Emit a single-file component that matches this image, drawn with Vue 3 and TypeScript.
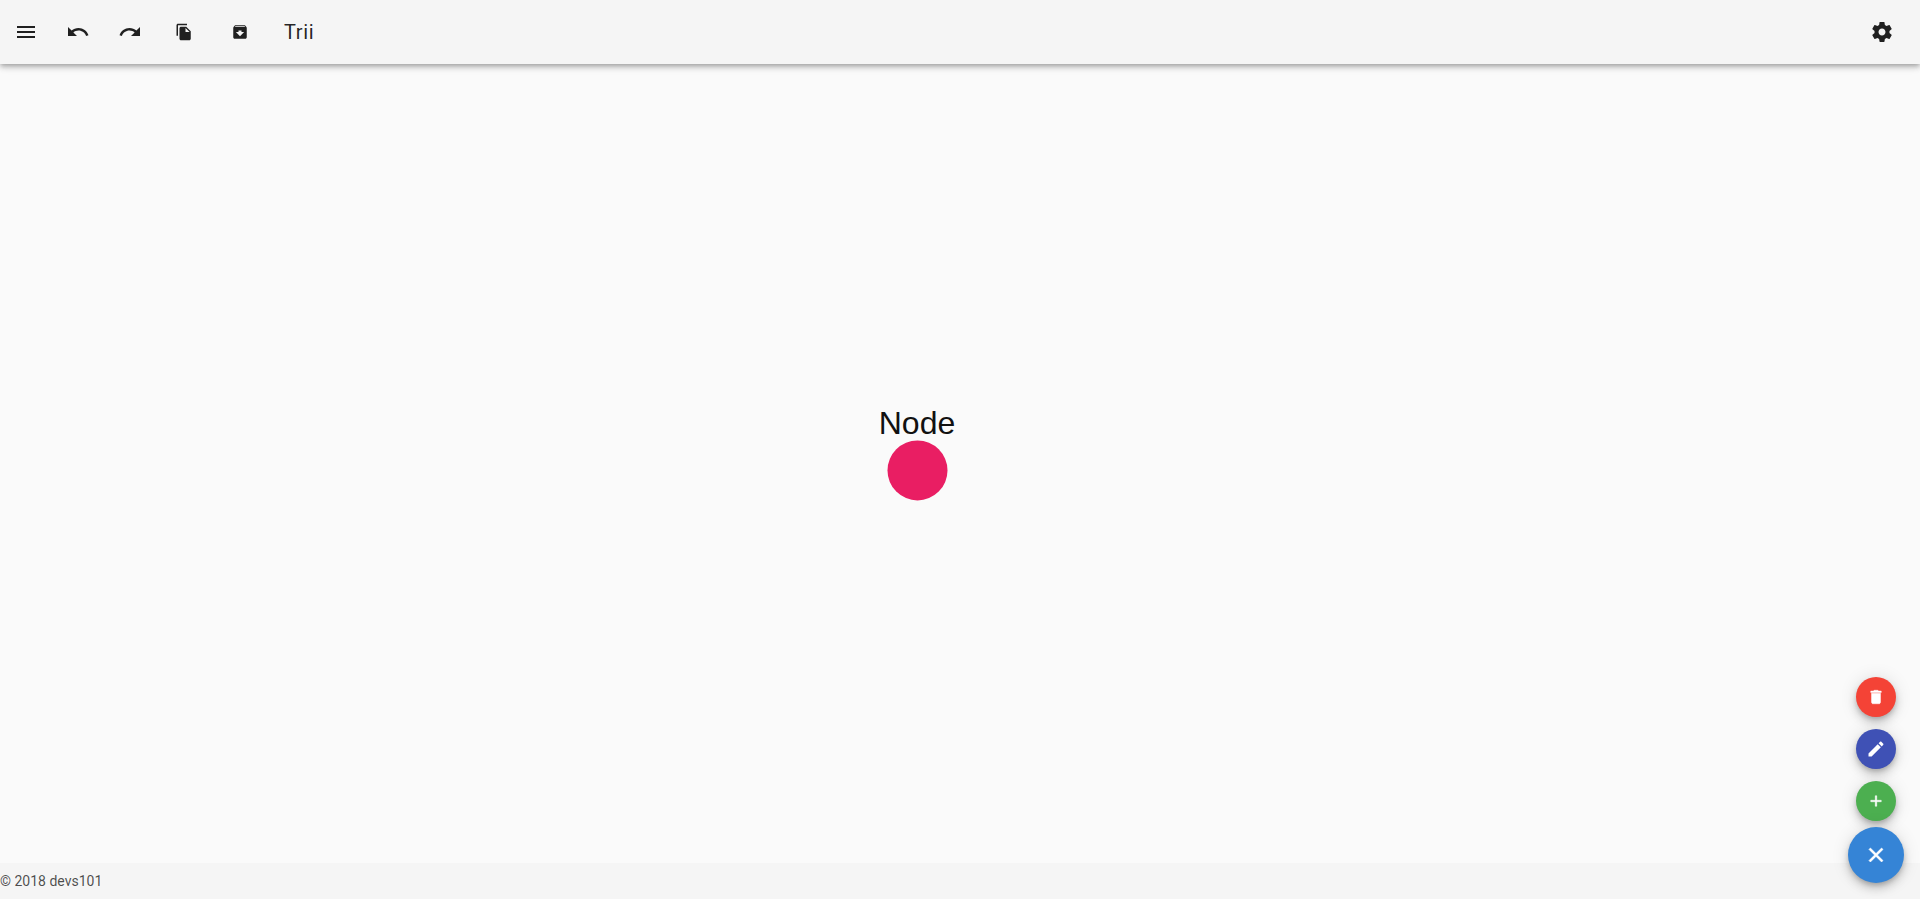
<script setup lang="ts">
interface ToolIcon {
  name: string
  path: string
  cls: string
}

const tools: ToolIcon[] = [
  { name: 'menu', cls: 'wide', path: 'M3 18h18v-2H3v2zm0-5h18v-2H3v2zm0-7v2h18V6H3z' },
  { name: 'undo', cls: 'wide', path: 'M12.5 8c-2.65 0-5.05.99-6.9 2.6L2 7v9h9l-3.62-3.62c1.39-1.16 3.16-1.88 5.12-1.88 3.54 0 6.55 2.31 7.6 5.5l2.37-.78C21.08 11.03 17.15 8 12.5 8z' },
  { name: 'redo', cls: 'wide', path: 'M18.4 10.6C16.55 8.99 14.15 8 11.5 8c-4.65 0-8.58 3.03-9.96 7.22L3.9 16c1.05-3.19 4.05-5.5 7.6-5.5 1.95 0 3.73.72 5.12 1.88L13 16h9V7l-3.6 3.6z' },
  { name: 'copy', cls: 'small', path: 'M16 1H4c-1.1 0-2 .9-2 2v14h2V3h12V1zm-1 4l6 6v10c0 1.1-.9 2-2 2H7.99C6.89 23 6 22.1 6 21l.01-14c0-1.1.89-2 1.99-2h7zm-1 7h5.5L14 6.5V12z' },
  { name: 'archive', cls: 'small', path: 'M20.54 5.23l-1.39-1.68C18.88 3.21 18.47 3 18 3H6c-.47 0-.88.21-1.16.55L3.46 5.23C3.17 5.57 3 6.02 3 6.5V19c0 1.1.9 2 2 2h14c1.1 0 2-.9 2-2V6.5c0-.48-.17-.93-.46-1.27zM12 17.5L6.5 12H10v-2h4v2h3.5L12 17.5zM5.12 5l.81-1h12.12l.94 1H5.12z' }
]

const settingsPath = 'M19.43 12.98c.04-.32.07-.64.07-.98s-.03-.66-.07-.98l2.11-1.65c.19-.15.24-.42.12-.64l-2-3.46c-.12-.22-.39-.3-.61-.22l-2.49 1c-.52-.4-1.08-.73-1.69-.98l-.38-2.65C14.46 2.18 14.25 2 14 2h-4c-.25 0-.46.18-.49.42l-.38 2.65c-.61.25-1.17.59-1.69.98l-2.49-1c-.23-.09-.49 0-.61.22l-2 3.46c-.13.22-.07.49.12.64l2.11 1.65c-.04.32-.07.65-.07.98s.03.66.07.98l-2.11 1.65c-.19.15-.24.42-.12.64l2 3.46c.12.22.39.3.61.22l2.49-1c.52.4 1.08.73 1.69.98l.38 2.65c.03.24.24.42.49.42h4c.25 0 .46-.18.49-.42l.38-2.65c.61-.25 1.17-.59 1.69-.98l2.49 1c.23.09.49 0 .61-.22l2-3.46c.12-.22.07-.49-.12-.64l-2.11-1.65zM12 15.5c-1.93 0-3.5-1.57-3.5-3.5s1.57-3.5 3.5-3.5 3.5 1.57 3.5 3.5-1.57 3.5-3.5 3.5z'

interface Fab {
  name: string
  color: string
  path: string
}

const fabs: Fab[] = [
  { name: 'delete', color: 'red', path: 'M6 19c0 1.1.9 2 2 2h8c1.1 0 2-.9 2-2V7H6v12zM19 4h-3.5l-1-1h-5l-1 1H5v2h14V4z' },
  { name: 'edit', color: 'indigo', path: 'M3 17.25V21h3.75L17.81 9.94l-3.75-3.75L3 17.25zM20.71 7.04c.39-.39.39-1.02 0-1.41l-2.34-2.34c-.39-.39-1.02-.39-1.41 0l-1.83 1.83 3.75 3.75 1.83-1.83z' },
  { name: 'add', color: 'green', path: 'M19 13h-6v6h-2v-6H5v-2h6V5h2v6h6v2z' }
]

const closePath = 'M19 6.41L17.59 5 12 10.59 6.41 5 5 6.41 10.59 12 5 17.59 6.41 19 12 13.41 17.59 19 19 17.59 13.41 12z'
</script>

<template>
  <div class="app">
    <header class="toolbar">
      <button v-for="t in tools" :key="t.name" class="tool" :class="[t.name, t.cls]" type="button">
        <svg viewBox="0 0 24 24"><path :d="t.path" /></svg>
      </button>
      <span class="title">Trii</span>
      <button class="tool settings" type="button">
        <svg viewBox="0 0 24 24"><path :d="settingsPath" /></svg>
      </button>
    </header>

    <main class="canvas">
      <svg class="tree" width="1920" height="799" viewBox="0 64 1920 799">
        <text class="node-label" x="917" y="434" text-anchor="middle">Node</text>
        <circle cx="917.5" cy="470.4" r="30" fill="#e91e63" />
      </svg>
    </main>

    <footer class="footer">© 2018 devs101</footer>

    <div class="fab-stack">
      <button v-for="f in fabs" :key="f.name" class="fab" :class="[f.color, f.name]" type="button">
        <svg viewBox="0 0 24 24"><path :d="f.path" /></svg>
      </button>
      <button class="fab main" type="button">
        <svg viewBox="0 0 24 24"><path :d="closePath" /></svg>
      </button>
    </div>
  </div>
</template>

<style>
html,
body {
  margin: 0;
  background: #fafafa;
  overflow: hidden;
}
</style>

<style scoped>
.app {
  position: relative;
  display: flex;
  flex-direction: column;
  height: 100vh;
  background: #fafafa;
  font-family: Roboto, "Liberation Sans", sans-serif;
  color: rgba(0, 0, 0, 0.87);
}

.toolbar {
  position: relative;
  z-index: 2;
  display: flex;
  align-items: center;
  flex: 0 0 64px;
  height: 64px;
  box-sizing: border-box;
  background: #f5f5f5;
  box-shadow: 0 2px 4px -1px rgba(0, 0, 0, 0.2), 0 4px 5px 0 rgba(0, 0, 0, 0.14), 0 1px 10px 0 rgba(0, 0, 0, 0.12);
}

.tool {
  display: flex;
  align-items: center;
  justify-content: center;
  flex: 0 0 auto;
  width: 24px;
  height: 24px;
  padding: 0;
  border: 0;
  background: none;
  color: rgba(0, 0, 0, 0.87);
}

.tool svg {
  display: block;
  width: 24px;
  height: 24px;
  fill: currentColor;
}

.tool.small svg {
  width: 18px;
  height: 18px;
}

.menu { margin-left: 14px; }
.undo { margin-left: 28px; }
.redo { margin-left: 28px; }
.copy { margin-left: 30px; }
.archive { margin-left: 32px; }

.title {
  margin-left: 32px;
  font-size: 20px;
  font-weight: 400;
  letter-spacing: 0.03em;
}

.settings {
  margin-left: auto;
  margin-right: 26px;
}

.canvas {
  flex: 1 1 auto;
  min-height: 0;
  overflow: hidden;
}

.tree {
  display: block;
}

.node-label {
  font-family: "Liberation Sans", Arial, sans-serif;
  font-size: 32px;
  fill: #111;
}

.footer {
  flex: 0 0 36px;
  height: 36px;
  line-height: 36px;
  background: #f5f5f5;
  font-size: 14px;
  color: rgba(0, 0, 0, 0.7);
}

.fab-stack {
  position: absolute;
  right: 16px;
  bottom: 16px;
  display: flex;
  flex-direction: column;
  align-items: center;
  z-index: 3;
}

.fab {
  display: flex;
  align-items: center;
  justify-content: center;
  width: 40px;
  height: 40px;
  margin-bottom: 12px;
  padding: 0;
  border: 0;
  border-radius: 50%;
  color: #fff;
  box-shadow: 0 3px 5px -1px rgba(0, 0, 0, 0.2), 0 6px 10px 0 rgba(0, 0, 0, 0.14), 0 1px 18px 0 rgba(0, 0, 0, 0.12);
}

.fab svg {
  display: block;
  width: 18px;
  height: 18px;
  fill: currentColor;
}

.red { background: #f44336; }
.indigo { background: #3f51b5; }
.green { background: #4caf50; }

.fab.delete svg {
  stroke: currentColor;
  stroke-width: 0.6;
}

.fab.edit svg {
  width: 20px;
  height: 20px;
}

.fab.green {
  margin-bottom: 6px;
}

.fab.green svg {
  stroke: currentColor;
  stroke-width: 0.6;
}

.fab.main {
  width: 56px;
  height: 56px;
  margin-bottom: 0;
  background: #3584d6;
}

.fab.main svg {
  width: 24px;
  height: 24px;
  stroke: currentColor;
  stroke-width: 0.6;
}
</style>
